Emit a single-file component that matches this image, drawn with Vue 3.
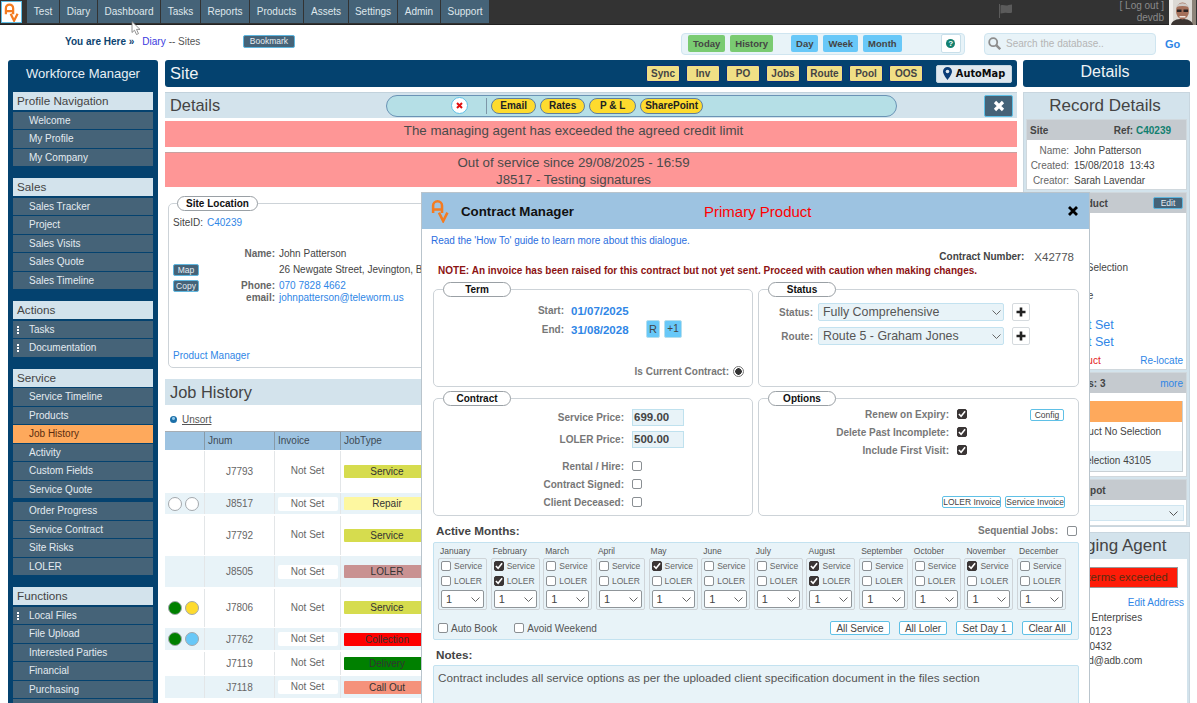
<script setup>
const topNav = [
  { label: 'Test', w: 32 }, { label: 'Diary', w: 37 }, { label: 'Dashboard', w: 62 }, { label: 'Tasks', w: 39 },
  { label: 'Reports', w: 48 }, { label: 'Products', w: 53 }, { label: 'Assets', w: 44 }, { label: 'Settings', w: 48 },
  { label: 'Admin', w: 42 }, { label: 'Support', w: 48 },
]

const sideGroups = [
  { title: 'Profile Navigation', items: [{ t: 'Welcome' }, { t: 'My Profile' }, { t: 'My Company' }] },
  { title: 'Sales', items: [{ t: 'Sales Tracker' }, { t: 'Project' }, { t: 'Sales Visits' }, { t: 'Sales Quote' }, { t: 'Sales Timeline' }] },
  { title: 'Actions', items: [{ t: 'Tasks', dots: true }, { t: 'Documentation', dots: true }] },
  {
    title: 'Service',
    items: [{ t: 'Service Timeline' }, { t: 'Products' }, { t: 'Job History', active: true }, { t: 'Activity' }, { t: 'Custom Fields' }, { t: 'Service Quote' },
      { t: 'Order Progress', gap: true }, { t: 'Service Contract' }, { t: 'Site Risks' }, { t: 'LOLER' }],
  },
  { title: 'Functions', items: [{ t: 'Local Files', dots: true }, { t: 'File Upload' }, { t: 'Interested Parties' }, { t: 'Financial' }, { t: 'Purchasing' }, { t: '' }] },
]

const siteBtns = [
  { t: 'Sync', w: 34 }, { t: 'Inv', w: 34 }, { t: 'PO', w: 34 }, { t: 'Jobs', w: 34 },
  { t: 'Route', w: 37 }, { t: 'Pool', w: 34 }, { t: 'OOS', w: 34 },
]
const pillBtns = [
  { t: 'Email', w: 45 }, { t: 'Rates', w: 45 }, { t: 'P & L', w: 47 }, { t: 'SharePoint', w: 63 },
]

const jobs = [
  { num: 'J7793', h: 41, type: 'Service', color: '#d6dc4e' },
  { num: 'J8517', h: 21, type: 'Repair', color: '#fdf7a0', dots: ['#fff', '#fff'] },
  { num: 'J7792', h: 39, type: 'Service', color: '#d6dc4e' },
  { num: 'J8505', h: 31, type: 'LOLER', color: '#c99292' },
  { num: 'J7806', h: 38, type: 'Service', color: '#d6dc4e', dots: ['#008000', '#fedb2e'] },
  { num: 'J7762', h: 22, type: 'Collection', color: '#fe0000', dots: ['#008000', '#68c8f8'] },
  { num: 'J7119', h: 23, type: 'Delivery', color: '#008000' },
  { num: 'J7118', h: 22, type: 'Call Out', color: '#f5927b' },
]

const months = [
  { m: 'January' }, { m: 'February', s: true, l: true }, { m: 'March' }, { m: 'April' },
  { m: 'May', s: true }, { m: 'June' }, { m: 'July' }, { m: 'August', s: true, l: true },
  { m: 'September' }, { m: 'October' }, { m: 'November', s: true }, { m: 'December' },
]

const footBtns = [
  { t: 'All Service', w: 60 }, { t: 'All Loler', w: 48 }, { t: 'Set Day 1', w: 57 }, { t: 'Clear All', w: 50 },
]

const contractChecks = ['Rental / Hire:', 'Contract Signed:', 'Client Deceased:']
const optionChecks = ['Renew on Expiry:', 'Delete Past Incomplete:', 'Include First Visit:']
</script>

<template>
  <div class="page">
    <header class="topbar">
      <div class="logoBox">
        <svg width="15" height="19" viewBox="0 0 17 22" fill="none" stroke="#f47b20" stroke-width="2.6">
          <path d="M2 13V6a4.2 4.2 0 0 1 8.4 0v7M2 9.5h8.4" />
          <path d="M7.5 12.5l4 8 4-8" />
        </svg>
      </div>
      <nav class="topNav">
        <a v-for="n in topNav" :key="n.label" class="topItem" :style="{ width: n.w + 'px' }">{{ n.label }}</a>
      </nav>
      <svg class="flag" width="15" height="14" viewBox="0 0 15 14">
        <path d="M1 0h1v14H1zM2.500 1.500c3-1.500 5 1 8-.5l3.500-.5v8c-3 1.500-5-.5-8 .5l-3.500.5z" fill="#5b5b5b" />
      </svg>
      <div class="userInfo">
        <span>[ Log out ]</span>
        <span>devdb</span>
      </div>
      <svg class="avatar" width="27" height="25" viewBox="0 0 27 25">
        <rect width="27" height="25" fill="#dcd9d4" />
        <rect width="4" height="25" fill="#f1efec" />
        <rect x="23" width="4" height="25" fill="#8d8479" />
        <path d="M2 25c1-5 6-6 11-6s10 1 11 6z" fill="#3b3431" />
        <ellipse cx="13.500" cy="11" rx="6.500" ry="8.500" fill="#a5705a" />
        <path d="M7 7c2-5 11-5 13 0-4-1.500-9-1.500-13 0z" fill="#cfcac6" />
        <path d="M8 9.500h4.500v2.500H8zM14.500 9.500H19v2.500h-4.500z" fill="#2a2323" />
        <path d="M10.500 16h6v1.500h-6z" fill="#eee6e0" />
      </svg>
    </header>

    <div class="crumbBar">
      <div class="crumbs">
        <b>You are Here »</b>
        <a class="crumbLink">Diary</a>
        <span>-- Sites</span>
      </div>
      <button class="btnDark bookmark">Bookmark</button>
      <div class="rangeBox">
        <button class="rangeBtn green">Today</button>
        <button class="rangeBtn green">History</button>
        <button class="rangeBtn blue first">Day</button>
        <button class="rangeBtn blue">Week</button>
        <button class="rangeBtn blue">Month</button>
        <div class="helpBtn"><span class="helpDot">?</span></div>
      </div>
      <div class="searchBox">
        <svg width="13" height="13" viewBox="0 0 13 13" fill="none" stroke="#8d8d8d" stroke-width="1.800">
          <circle cx="5.200" cy="5.200" r="4" /><path d="M8.200 8.200l4 4" stroke-width="2.400" />
        </svg>
        <span>Search the database..</span>
      </div>
      <a class="goLink">Go</a>
    </div>

    <div class="columns">
      <aside class="sidebar">
        <h2 class="sideTitle">Workforce Manager</h2>
        <section v-for="g in sideGroups" :key="g.title" class="sideGroup">
          <h3 class="sideHead">{{ g.title }}</h3>
          <a v-for="i in g.items" :key="i.t" class="sideItem" :class="{ active: i.active, gapTop: i.gap }">
            <span v-if="i.dots" class="sideDots"><i></i><i></i><i></i></span>
            {{ i.t }}
          </a>
        </section>
      </aside>

      <main class="mainCol">
        <div class="siteBar">
          <h1>Site</h1>
          <div class="siteBtns">
            <button v-for="b in siteBtns" :key="b.t" class="siteBtn" :style="{ width: b.w + 'px' }">{{ b.t }}</button>
          </div>
          <button class="autoMap">
            <svg width="9" height="13" viewBox="0 0 9 13">
              <path d="M4.500 0a4.500 4.500 0 0 1 4.500 4.500C9 7.500 4.500 13 4.500 13S0 7.500 0 4.500A4.500 4.500 0 0 1 4.500 0z" fill="#0a3c76" />
              <circle cx="4.500" cy="4.500" r="1.800" fill="#dfe8ef" />
            </svg>
            AutoMap
          </button>
        </div>

        <div class="panelHead detailsHead">
          <h2>Details</h2>
          <div class="pillBar">
            <span class="redX">
              <svg width="7" height="7" viewBox="0 0 7 7"><path d="M1 1l5 5M6 1L1 6" stroke="#e01010" stroke-width="2" /></svg>
            </span>
            <span class="pillSep"></span>
            <button v-for="p in pillBtns" :key="p.t" class="pillBtn" :style="{ width: p.w + 'px' }">{{ p.t }}</button>
          </div>
          <button class="closeBtn">
            <svg width="12" height="12" viewBox="0 0 12 12"><path d="M2 2l8 8M10 2l-8 8" stroke="#fff" stroke-width="3.200" /></svg>
          </button>
        </div>

        <div class="banner one">The managing agent has exceeded the agreed credit limit</div>
        <div class="banner two">
          <div>Out of service since 29/08/2025 - 16:59</div>
          <div>J8517 - Testing signatures</div>
        </div>

        <div class="locBox">
          <div class="legend locLegend">Site Location</div>
          <div class="siteId">SiteID: <a class="link">C40239</a></div>
          <div class="locGrid">
            <span></span><b class="locLabel">Name:</b><span class="locVal">John Patterson</span>
            <button class="btnDark miniBtn">Map</button><span></span><span class="locVal">26 Newgate Street, Jevington, BN26 5QF</span>
            <button class="btnDark miniBtn">Copy</button><b class="locLabel">Phone:</b><a class="link locVal">070 7828 4662</a>
            <span></span><b class="locLabel">email:</b><a class="link locVal">johnpatterson@teleworm.us</a>
          </div>
          <a class="link productLink">Product Manager</a>
        </div>

        <div class="panelHead jobHead"><h2>Job History</h2></div>
        <div class="unsortRow">
          <span class="infoDot"></span>
          <a class="unsort">Unsort</a>
        </div>
        <div class="jobTable">
          <div class="jobRow headRow">
            <div></div><div>Jnum</div><div>Invoice</div><div>JobType</div>
          </div>
          <div v-for="(j, idx) in jobs" :key="j.num" class="jobRow" :class="{ alt: idx % 2 === 1 }" :style="{ height: j.h + 'px' }">
            <div class="dotCell">
              <template v-if="j.dots">
                <span v-for="(d, k) in j.dots" :key="k" class="dot" :style="{ background: d }"></span>
              </template>
            </div>
            <div class="numCell">{{ j.num }}</div>
            <div class="numCell"><span class="notSet">Not Set</span></div>
            <div class="typeCell"><span class="typeTag" :style="{ background: j.color }">{{ j.type }}</span></div>
          </div>
        </div>
      </main>

      <aside class="rightCol">
        <div class="rightBar">Details</div>
        <div class="rightPanel recordPanel">
          <h2 class="rightHead">Record Details</h2>
          <div class="rBox">
            <div class="rGray"><b>Site</b><b class="refText">Ref: <span>C40239</span></b></div>
            <div class="recRows">
              <span class="recKey">Name:</span><span>John Patterson</span>
              <span class="recKey">Created:</span><span>15/08/2018&nbsp; 13:43</span>
              <span class="recKey">Creator:</span><span>Sarah Lavendar</span>
            </div>
          </div>
          <div class="rBox prodBox">
            <div class="rGray"><b>Primary Product</b><button class="btnDark editBtn">Edit</button></div>
            <div class="prodRow r1">Product No Selection</div>
            <div class="prodRow r2">Service</div>
            <div class="prodRow big r3">Not Set</div>
            <div class="prodRow big r4">Not Set</div>
            <div class="prodRow r5"><span class="redText">Primary Product</span><a class="link">Re-locate</a></div>
          </div>
          <div class="rBox jobsBox">
            <div class="rGray"><b class="unitsText">Active Units: 3</b><a class="link">more</a></div>
            <div class="prodList">
              <div class="orangeRow"></div>
              <div class="listRow tall">Primary Product No Selection</div>
              <div class="listRow alt">Product Selection 43105</div>
            </div>
          </div>
          <div class="rBox depotBox">
            <div class="rGray"><b>Preferred Depot</b></div>
            <div class="depotSelect">
              <svg width="9" height="5" viewBox="0 0 9 5" fill="none" stroke="#555"><path d="M.500.500l4 4 4-4" /></svg>
            </div>
          </div>
        </div>
        <div class="rightPanel agentPanel">
          <h2 class="rightHead">Managing Agent</h2>
          <div class="agentBody">
            <div class="termsBar">Credit terms exceeded</div>
            <a class="link editAddr">Edit Address</a>
            <div class="agentLine">Arnold Golds Enterprises</div>
            <div class="agentLine phone">020 7946 0123</div>
            <div class="agentLine phone">020 7946 0432</div>
            <div class="agentLine">pk.arnold.gold@adb.com</div>
          </div>
        </div>
      </aside>
    </div>

    <!-- dialog floats over the page -->
    <div class="dialog">
      <div class="dlgHead">
        <svg class="dlgLogo" width="18" height="24" viewBox="0 0 17 22" fill="none" stroke="#f47b20" stroke-width="2.400">
          <path d="M2 13V6a4.200 4.200 0 0 1 8.400 0v7M2 9.500h8.400" />
          <path d="M7.500 12.500l4 8 4-8" />
        </svg>
        <span class="dlgTitle">Contract Manager</span>
        <span class="dlgPrimary">Primary Product</span>
        <svg class="dlgClose" width="10" height="10" viewBox="0 0 10 10"><path d="M1 1l8 8M9 1L1 9" stroke="#000" stroke-width="2.800" /></svg>
      </div>
      <div class="dlgBody">
        <a class="howTo">Read the 'How To' guide to learn more about this dialogue.</a>
        <div class="numberLine"><b>Contract Number:</b><span>X42778</span></div>
        <div class="note">NOTE: An invoice has been raised for this contract but not yet sent. Proceed with caution when making changes.</div>

        <div class="fsGrid topRow">
          <div class="fs">
            <div class="legend">Term</div>
            <div class="termRows">
              <b class="fsLabel">Start:</b><b class="dateVal">01/07/2025</b><span></span>
              <b class="fsLabel">End:</b><b class="dateVal">31/08/2028</b>
              <span class="termBtns"><button class="blueBtn">R</button><button class="blueBtn">+1</button></span>
            </div>
            <div class="currentLine">
              <b class="fsLabel">Is Current Contract:</b>
              <span class="radio"></span>
            </div>
          </div>
          <div class="fs">
            <div class="legend">Status</div>
            <div class="statusRows">
              <b class="fsLabel">Status:</b>
              <div class="selectBox">Fully Comprehensive
                <svg width="9" height="5" viewBox="0 0 9 5" fill="none" stroke="#666"><path d="M.500.500l4 4 4-4" /></svg>
              </div>
              <button class="plusBtn"><svg width="10" height="10" viewBox="0 0 10 10"><path d="M5 .500v9M.500 5h9" stroke="#222" stroke-width="2.600" /></svg></button>
              <b class="fsLabel">Route:</b>
              <div class="selectBox">Route 5 - Graham Jones
                <svg width="9" height="5" viewBox="0 0 9 5" fill="none" stroke="#666"><path d="M.500.500l4 4 4-4" /></svg>
              </div>
              <button class="plusBtn"><svg width="10" height="10" viewBox="0 0 10 10"><path d="M5 .500v9M.500 5h9" stroke="#222" stroke-width="2.600" /></svg></button>
            </div>
          </div>
        </div>

        <div class="fsGrid midRow">
          <div class="fs">
            <div class="legend">Contract</div>
            <div class="priceRows">
              <b class="fsLabel">Service Price:</b><span class="priceBox">699.00</span>
              <b class="fsLabel">LOLER Price:</b><span class="priceBox">500.00</span>
            </div>
            <div class="checkRows">
              <template v-for="c in contractChecks" :key="c">
                <b class="fsLabel">{{ c }}</b><span class="chk"></span>
              </template>
            </div>
          </div>
          <div class="fs optionsFs">
            <div class="legend">Options</div>
            <button class="outlineBtn configBtn">Config</button>
            <div class="optionRows">
              <template v-for="c in optionChecks" :key="c">
                <b class="fsLabel">{{ c }}</b>
                <span class="chk on"><svg width="9" height="8" viewBox="0 0 9 8" fill="none" stroke="#fff" stroke-width="1.800"><path d="M1 4l2.500 2.500L8 1" /></svg></span>
              </template>
            </div>
            <div class="invoiceBtns">
              <button class="outlineBtn">LOLER Invoice</button>
              <button class="outlineBtn">Service Invoice</button>
            </div>
          </div>
        </div>

        <div class="monthsTitle">
          <b class="sectionLabel">Active Months:</b>
          <span class="seqLine"><b class="fsLabel">Sequential Jobs:</b><span class="chk"></span></span>
        </div>
        <div class="monthsBox">
          <div class="monthGrid">
            <div v-for="mo in months" :key="mo.m" class="month">
              <div class="monthName">{{ mo.m }}</div>
              <div class="monthCard">
                <label class="monthChk">
                  <span class="chk" :class="{ on: mo.s }"><svg v-if="mo.s" width="9" height="8" viewBox="0 0 9 8" fill="none" stroke="#fff" stroke-width="1.800"><path d="M1 4l2.500 2.500L8 1" /></svg></span>Service
                </label>
                <label class="monthChk">
                  <span class="chk" :class="{ on: mo.l }"><svg v-if="mo.l" width="9" height="8" viewBox="0 0 9 8" fill="none" stroke="#fff" stroke-width="1.800"><path d="M1 4l2.500 2.500L8 1" /></svg></span>LOLER
                </label>
                <div class="daySelect">1
                  <svg width="9" height="5" viewBox="0 0 9 5" fill="none" stroke="#666"><path d="M.500.500l4 4 4-4" /></svg>
                </div>
              </div>
            </div>
          </div>
          <div class="monthFoot">
            <label class="footChk"><span class="chk"></span>Auto Book</label>
            <label class="footChk"><span class="chk"></span>Avoid Weekend</label>
            <div class="footBtns">
              <button v-for="b in footBtns" :key="b.t" class="outlineBtn wide" :style="{ width: b.w + 'px' }">{{ b.t }}</button>
            </div>
          </div>
        </div>

        <b class="sectionLabel notesLabel">Notes:</b>
        <div class="notes">Contract includes all service options as per the uploaded client specification document in the files section</div>
      </div>
    </div>

    <svg class="cursor" width="10" height="14" viewBox="0 0 10 14">
      <path d="M1 .500v11l2.500-2.300 2 4.300 2-.900-2-4.200H9z" fill="#fff" stroke="#777" stroke-width=".8" />
    </svg>
  </div>
</template>

<style>
html, body {
  margin: 0;
  background: #fff;
}
</style>

<style scoped>
.page {
  position: relative;
  width: 1197px;
  height: 703px;
  overflow: hidden;
  font-family: "Liberation Sans", Arial, sans-serif;
  font-size: 10px;
  color: #444;
}
button {
  font-family: inherit;
  padding: 0;
  cursor: pointer;
}
h1, h2, h3 {
  margin: 0;
  font-weight: 400;
}
.link {
  color: #2f86e6;
}

/* top bar */
.topbar {
  display: flex;
  align-items: flex-start;
  height: 25px;
  background: #333;
  border-bottom: 1px solid #222;
  box-sizing: border-box;
}
.logoBox {
  display: flex;
  align-items: center;
  justify-content: center;
  width: 21px;
  height: 22px;
  margin: 1px 5px 0 1px;
  background: #fff;
  border: 1px solid #5fbfe6;
  box-sizing: border-box;
}
.topNav {
  display: flex;
  gap: 1px;
}
.topItem {
  display: flex;
  align-items: center;
  justify-content: center;
  height: 23px;
  background: #456378;
  color: #dfe7ec;
  font-size: 10px;
}
.flag {
  margin: 4px 0 0 509px;
}
.userInfo {
  display: flex;
  flex-direction: column;
  align-items: flex-end;
  width: 45px;
  margin: 0 0 0 106px;
  color: #8a8a8a;
  font-size: 10px;
  line-height: 11.500px;
}
.avatar {
  margin-left: 5px;
}

/* breadcrumb row */
.crumbBar {
  display: flex;
  align-items: center;
  height: 35px;
}
.crumbs {
  display: flex;
  gap: 8px;
  width: 178px;
  margin-left: 65px;
  margin-top: -3px;
  color: #555;
}
.crumbs b {
  color: #0e4470;
}
.crumbs span {
  margin-left: -5px;
}
.crumbLink {
  color: #3a3ae0;
}
.btnDark {
  background: #456378;
  color: #e6edf2;
  border: 1px solid #5fb6de;
  border-radius: 2px;
}
.bookmark {
  width: 52px;
  height: 13px;
  margin-top: -3px;
  font-size: 8.500px;
  line-height: 10px;
}
.rangeBox {
  display: flex;
  align-items: center;
  width: 284px;
  height: 22px;
  margin: 2px 0 0 386px;
  padding-left: 6px;
  gap: 5px;
  box-sizing: border-box;
  background: #e8f3f8;
  border: 1px solid #cfe5f0;
  border-radius: 4px;
}
.rangeBtn {
  height: 17px;
  padding: 0 4px;
  font-size: 9.500px;
  font-weight: 700;
  color: #444;
  border: 1px solid transparent;
  border-radius: 2px;
}
.rangeBtn.green {
  background: #7acb72;
}
.rangeBtn.blue {
  background: #68c8f8;
}
.rangeBtn.first {
  margin-left: 13px;
}
.helpBtn {
  display: flex;
  align-items: center;
  justify-content: center;
  width: 18px;
  height: 17px;
  margin-left: 34px;
  background: #fff;
  border: 1px solid #c9dfe9;
  border-radius: 2px;
}
.helpDot {
  display: block;
  width: 9px;
  height: 9px;
  border-radius: 50%;
  background: #12806f;
  color: #fff;
  font-size: 8px;
  font-weight: 700;
  line-height: 9px;
  text-align: center;
}
.searchBox {
  display: flex;
  align-items: center;
  gap: 5px;
  width: 172px;
  height: 22px;
  margin: 2px 0 0 19px;
  padding-left: 3px;
  box-sizing: border-box;
  background: #e8f3f8;
  border: 1px solid #cfe5f0;
  border-radius: 4px;
  color: #b5b5b5;
  font-size: 10px;
}
.goLink {
  margin: 2px 0 0 9px;
  color: #2f86e6;
  font-size: 11px;
  font-weight: 700;
}

/* page columns */
.columns {
  display: grid;
  grid-template-columns: 150px 852px 167px;
  column-gap: 7px;
  padding-left: 8px;
}

/* sidebar */
.sidebar {
  height: 643px;
  padding: 0 5px;
  box-sizing: border-box;
  overflow: hidden;
  background: #04426f;
  border-radius: 3px 3px 0 0;
}
.sideTitle {
  height: 32px;
  color: #e8eff4;
  font-size: 13px;
  line-height: 28px;
  text-align: center;
}
.sideGroup {
  margin-bottom: 12px;
}
.sideHead {
  height: 18px;
  margin-bottom: 1.500px;
  padding-left: 4px;
  background: #d3e3ec;
  color: #444;
  font-size: 11.700px;
  line-height: 18px;
}
.sideItem {
  position: relative;
  display: block;
  height: 17.500px;
  margin-bottom: 1px;
  padding-left: 16px;
  background: #456378;
  color: #e4ebf0;
  font-size: 10px;
  line-height: 17.500px;
}
.sideItem.active {
  background: #fea95c;
  color: #5a2c10;
}
.sideItem.gapTop {
  margin-top: 4px;
}
.sideDots {
  position: absolute;
  left: 4px;
  top: 5px;
  display: flex;
  flex-direction: column;
  gap: 1px;
}
.sideDots i {
  display: block;
  width: 2px;
  height: 2px;
  background: #fff;
}

/* main column */
.mainCol {
  height: 643px;
  overflow: hidden;
}
.siteBar {
  display: flex;
  align-items: center;
  height: 27px;
  padding: 0 5px;
  background: #04426f;
  border-radius: 3px;
}
.siteBar h1 {
  flex: 1;
  color: #eef3f6;
  font-size: 16.500px;
}
.siteBtns {
  display: flex;
  gap: 6px;
}
.siteBtn {
  height: 17px;
  background: #f0df85;
  border: 1px solid #0a2f7a;
  border-radius: 2px;
  color: #444;
  font-size: 10px;
  font-weight: 700;
}
.autoMap {
  display: flex;
  align-items: center;
  justify-content: center;
  gap: 4px;
  width: 76px;
  height: 18px;
  margin-left: 13px;
  background: #dfe8ef;
  border: 1px solid #c5d5e0;
  border-radius: 2px;
  color: #0b0b0b;
  font-family: "DejaVu Sans", sans-serif;
  font-size: 9.800px;
  font-weight: 700;
}
.panelHead {
  display: flex;
  align-items: center;
  background: #d3e3ec;
  padding-left: 5px;
}
.panelHead h2 {
  color: #444;
  font-size: 16.400px;
}
.detailsHead {
  height: 26px;
  margin-top: 5px;
  border-top: 1px solid #c2d2dc;
  box-sizing: border-box;
  position: relative;
}
.pillBar {
  display: flex;
  align-items: center;
  width: 511px;
  height: 22px;
  margin-left: 166px;
  padding-left: 64px;
  gap: 4px;
  box-sizing: border-box;
  background: #b5dfe6;
  border: 1px solid #6a93b5;
  border-radius: 11px;
}
.redX {
  display: flex;
  align-items: center;
  justify-content: center;
  width: 17px;
  height: 17px;
  background: #fff;
  border: 1px solid #5fc0e6;
  border-radius: 50%;
  box-sizing: border-box;
}
.pillSep {
  width: 1px;
  height: 16px;
  margin: 0 0 0 14px;
  background: #7d97a8;
}
.pillBtn {
  height: 16px;
  background: #fedb2e;
  border: 1px solid #5f7ea0;
  border-radius: 8px;
  color: #222;
  font-size: 10px;
  font-weight: 700;
}
.closeBtn {
  display: flex;
  align-items: center;
  justify-content: center;
  width: 29px;
  height: 22px;
  margin-left: 87px;
  background: #456378;
  border: 1px solid #5fc0e6;
  border-radius: 2px;
}
.banner {
  padding-right: 35px;
  background: #fe9696;
  color: #4a4a4a;
  font-size: 13.300px;
  text-align: center;
}
.banner.one {
  height: 26px;
  margin-top: 3px;
  line-height: 20px;
}
.banner.two {
  height: 35px;
  margin-top: 5px;
  padding-top: 1px;
  box-sizing: border-box;
  line-height: 17px;
  border-top: 1px solid #c9a0a0;
}
.locBox {
  height: 165px;
  margin: 16px 0 0 3px;
  padding: 0 4px;
  box-sizing: border-box;
  border: 1px solid #cdd3d8;
  border-radius: 5px;
}
.legend {
  box-sizing: border-box;
  width: 68px;
  height: 15px;
  margin: -8px 0 0 5px;
  background: #fff;
  border: 1px solid #9aa0a5;
  border-radius: 8px;
  color: #111;
  font-size: 10px;
  font-weight: 700;
  line-height: 13px;
  text-align: center;
}
.locLegend {
  width: 81px;
  margin-left: 4px;
}
.siteId {
  display: flex;
  gap: 4px;
  margin-top: 4.500px;
  line-height: 13px;
}
.locGrid {
  display: grid;
  grid-template-columns: 26px 76px 1fr;
  grid-template-rows: 16px 16px 16px 8px;
  align-items: center;
  margin-top: 17.500px;
  line-height: 12px;
}
.locLabel {
  color: #666;
  text-align: right;
}
.locVal {
  padding-left: 4px;
  white-space: nowrap;
}
.miniBtn {
  width: 26px;
  height: 12px;
  font-size: 8.500px;
  line-height: 9px;
}
.productLink {
  display: block;
  margin-top: 48px;
}
.jobHead {
  height: 26px;
  margin-top: 11px;
  padding-top: 1px;
  box-sizing: border-box;
}
.unsortRow {
  display: flex;
  align-items: center;
  gap: 5px;
  height: 26px;
  padding-left: 5px;
  padding-top: 2px;
  box-sizing: border-box;
  background: #fff;
}
.infoDot {
  width: 7px;
  height: 7px;
  background: radial-gradient(circle at 50% 35%, #8fc6e8 0 1px, #1b6fa8 2px);
  border-radius: 50%;
}
.unsort {
  text-decoration: underline;
  color: #555;
}
.jobTable {
  border-top: 1px solid #a6adb3;
}
.jobRow {
  display: grid;
  grid-template-columns: 40px 70px 66px 1fr;
  margin-bottom: 1.500px;
  background: #fff;
}
.jobRow > div {
  display: flex;
  align-items: center;
  border-right: 1px solid #e3e6e8;
}
.jobRow.alt {
  background: #e8f3f8;
}
.headRow {
  height: 17.500px;
  margin-bottom: 1px;
  background: #9dc3e1;
}
.headRow > div {
  padding-left: 3px;
  border-right: 1px solid #8799a7;
  color: #3d4a55;
}
.dotCell {
  gap: 3px;
  padding-left: 3px;
}
.dot {
  width: 14px;
  height: 14px;
  box-sizing: border-box;
  border: 1px solid #a3a8ac;
  border-radius: 50%;
}
.numCell {
  justify-content: center;
  color: #666;
}
.notSet {
  width: 60px;
  height: 14px;
  background: #fff;
  border-radius: 2px;
  line-height: 14px;
  text-align: center;
}
.typeCell {
  padding-left: 3px;
}
.typeTag {
  width: 86px;
  height: 13px;
  border-radius: 1px;
  color: #333;
  line-height: 13px;
  text-align: center;
}

/* right column */
.rightCol {
  width: 167px;
  margin-left: -1px;
}
.rightBar {
  height: 27px;
  padding-right: 3px;
  box-sizing: border-box;
  background: #04426f;
  border-radius: 3px;
  color: #eef3f6;
  font-size: 16px;
  line-height: 24px;
  text-align: center;
}
.rightPanel {
  margin-top: 5px;
  padding: 0 2px 3px;
  background: #d3e3ec;
  border: 1px solid #c8d6df;
  box-sizing: border-box;
}
.recordPanel {
  height: 435px;
}
.rightHead {
  height: 26px;
  padding-right: 3px;
  color: #444;
  font-size: 17px;
  line-height: 25px;
  text-align: center;
}
.rBox {
  background: #fff;
  border: 1px solid #d0d8dd;
  box-sizing: border-box;
  margin-bottom: 2px;
}
.rGray {
  display: flex;
  align-items: center;
  justify-content: space-between;
  height: 20px;
  padding: 0 3px 0 3px;
  background: #c5cacf;
  color: #444;
}
.refText span {
  color: #12806f;
}
.refText {
  margin-right: 12px;
}
.unitsText {
  margin-left: 6px;
}
.recRows {
  display: grid;
  grid-template-columns: 42px 1fr;
  column-gap: 5px;
  padding-top: 4px;
  height: 49px;
  box-sizing: border-box;
  line-height: 14.400px;
}
.recKey {
  text-align: right;
  color: #666;
}
.prodBox {
  height: 178px;
}
.editBtn {
  width: 30px;
  height: 12px;
  font-size: 8.500px;
  line-height: 8px;
}
.prodRow {
  padding-left: 7px;
  line-height: 13px;
  white-space: nowrap;
}
.r1 {
  margin-top: 48px;
}
.r2 {
  margin-top: 15px;
  padding-left: 33px;
}
.big {
  padding-left: 45px;
  font-size: 12.500px;
  color: #2f86e6;
  line-height: 17px;
}
.r3 {
  margin-top: 15px;
}
.r5 {
  display: flex;
  justify-content: space-between;
  align-items: center;
  margin-top: 3px;
  padding: 0 3px 0 2px;
}
.redText {
  color: #e31b1b;
}
.jobsBox {
  height: 105px;
}
.jobsBox .rGray {
  padding-right: 3px;
  margin-bottom: 9px;
}
.prodList {
  margin-right: 3px;
  border: 1px solid #c8d0d5;
  border-top: 0;
  border-left: 0;
  margin-top: -1px;
}
.orangeRow {
  height: 21px;
  background: #fea95c;
}
.listRow {
  padding-left: 3px;
  line-height: 14px;
  white-space: nowrap;
}
.listRow.tall {
  height: 29px;
  padding-top: 3px;
  box-sizing: border-box;
}
.listRow.alt {
  height: 20px;
  padding: 3px 0 0 15px;
  box-sizing: border-box;
  background: #e8f3f8;
}
.depotBox {
  height: 47px;
}
.depotSelect {
  display: flex;
  align-items: center;
  justify-content: flex-end;
  height: 14px;
  margin: 5px 2px 0 2px;
  padding-right: 5px;
  background: #e8f3f8;
  border: 1px solid #cfe5f0;
}
.agentPanel {
  height: 180px;
}
.agentBody {
  height: 150px;
  padding: 8px 3px 0;
  background: #fff;
}
.termsBar {
  height: 21px;
  margin: 0 6px 0 15px;
  background: #fe1c08;
  border: 1px solid #999;
  box-sizing: border-box;
  color: #5a2c10;
  font-size: 11.300px;
  line-height: 18px;
  text-align: center;
}
.editAddr {
  display: block;
  margin-top: 8px;
  text-align: right;
  line-height: 13px;
}
.agentLine {
  padding-left: 2px;
  margin-top: 1.500px;
  line-height: 13px;
  white-space: nowrap;
}
.agentLine.phone {
  padding-left: 16px;
}

/* dialog */
.dialog {
  position: absolute;
  left: 421px;
  top: 192px;
  width: 669px;
  height: 540px;
  background: #fff;
  border: 1px solid #b9c4cc;
  box-sizing: border-box;
}
.dlgHead {
  display: flex;
  align-items: center;
  height: 36px;
  background: #9dc3e1;
}
.dlgLogo {
  margin-left: 9px;
}
.dlgTitle {
  width: 243px;
  margin-left: 12px;
  color: #111;
  font-size: 13.300px;
  font-weight: 700;
  white-space: nowrap;
}
.dlgPrimary {
  width: 365px;
  color: #f00;
  font-size: 15px;
  white-space: nowrap;
}
.dlgClose {
  margin-left: -1px;
}
.dlgBody {
  padding: 5px 10px 0 11px;
}
.howTo {
  display: block;
  margin-left: -2px;
  color: #2a6ee0;
  line-height: 13px;
}
.numberLine {
  display: flex;
  justify-content: flex-end;
  align-items: center;
  gap: 10px;
  height: 13px;
  margin: 3px 5px 0 0;
}
.numberLine span {
  font-size: 11.500px;
  color: #555;
}
.note {
  margin: 1px 0 0 5px;
  color: #8c1313;
  font-weight: 700;
  letter-spacing: .02px;
  line-height: 13px;
  white-space: nowrap;
}
.fsGrid {
  display: grid;
  grid-template-columns: 320px 321px;
  column-gap: 5px;
}
.topRow {
  height: 98px;
  margin-top: 12px;
}
.midRow {
  height: 118px;
  margin-top: 11px;
}
.fs {
  position: relative;
  border: 1px solid #cdd3d8;
  border-radius: 5px;
  box-sizing: border-box;
}
.fs .legend {
  width: 68px;
  margin-left: 9px;
}
.fsLabel {
  color: #777;
  text-align: right;
  white-space: nowrap;
}
.termRows {
  display: grid;
  grid-template-columns: 130px 75px 1fr;
  column-gap: 5px;
  align-items: center;
  grid-auto-rows: 19px;
  margin-top: 4px;
}
.dateVal {
  margin-left: 2px;
  color: #2f86e6;
  font-size: 11.500px;
  white-space: nowrap;
}
.termBtns {
  display: flex;
  gap: 4px;
  margin: -2px 0 0 -3px;
}
.blueBtn {
  width: 14px;
  height: 18px;
  background: #68c8f8;
  border: 1px solid #b5dfee;
  border-radius: 2px;
  color: #444;
  font-size: 11px;
}
.blueBtn + .blueBtn {
  width: 18px;
  font-size: 10px;
}
.currentLine {
  display: flex;
  align-items: center;
  justify-content: flex-end;
  gap: 4px;
  margin: 27px 8px 0 0;
}
.radio {
  width: 11px;
  height: 11px;
  box-sizing: border-box;
  border: 1px solid #777;
  border-radius: 50%;
  background: radial-gradient(circle, #333 0 3px, #fff 3.500px);
}
.statusRows {
  display: grid;
  grid-template-columns: 54px 186px 18px;
  column-gap: 5px;
  row-gap: 6px;
  align-items: center;
  grid-auto-rows: 18px;
  margin-top: 6px;
}
.statusRows .plusBtn {
  margin-left: 3px;
}
.selectBox {
  display: flex;
  align-items: center;
  justify-content: space-between;
  height: 18px;
  padding: 0 2px 0 4px;
  box-sizing: border-box;
  background: #e8f3f8;
  border: 1px solid #c3e2f0;
  border-radius: 2px;
  color: #555;
  font-size: 12.400px;
  white-space: nowrap;
}
.plusBtn {
  display: flex;
  align-items: center;
  justify-content: center;
  width: 18px;
  height: 18px;
  background: #fff;
  border: 1px solid #d5dade;
  border-radius: 2px;
}
.priceRows {
  display: grid;
  grid-template-columns: 190px 52px;
  column-gap: 8px;
  align-items: center;
  grid-auto-rows: 17px;
  row-gap: 5px;
  margin-top: 3px;
}
.priceBox {
  height: 17px;
  padding-left: 1px;
  box-sizing: border-box;
  background: #e8f3f8;
  border: 1px solid #bfe1ee;
  color: #444;
  font-size: 11.500px;
  font-weight: 700;
  line-height: 15px;
}
.checkRows {
  display: grid;
  grid-template-columns: 190px 11px;
  column-gap: 8px;
  align-items: center;
  grid-auto-rows: 18px;
  margin-top: 9px;
}
.chk {
  display: inline-flex;
  align-items: center;
  justify-content: center;
  width: 10px;
  height: 10px;
  flex: none;
  box-sizing: border-box;
  background: #fff;
  border: 1px solid #8a8f93;
  border-radius: 2px;
}
.chk.on {
  background: #3a3535;
  border-color: #3a3535;
}
.optionRows {
  display: grid;
  grid-template-columns: 190px 11px;
  column-gap: 8px;
  align-items: center;
  grid-auto-rows: 18px;
  margin-top: -1px;
}
.outlineBtn {
  height: 12px;
  padding: 0;
  background: #fff;
  border: 1px solid #5fc0e6;
  border-radius: 2px;
  color: #444;
  font-size: 8.500px;
  line-height: 9px;
}
.configBtn {
  position: absolute;
  right: 14px;
  top: 10px;
  width: 34px;
}
.invoiceBtns {
  position: absolute;
  right: 13px;
  bottom: 7px;
  display: flex;
  gap: 4px;
}
.monthsTitle {
  display: flex;
  align-items: center;
  justify-content: space-between;
  height: 15px;
  margin: 7px 2px 0 3px;
}
.sectionLabel {
  color: #444;
  font-size: 11.700px;
}
.seqLine {
  display: flex;
  align-items: center;
  gap: 9px;
}
.seqLine .fsLabel {
  font-size: 10px;
}
.monthsBox {
  height: 98px;
  margin-top: 4px;
  padding: 3px 6px 0 4px;
  width: 646px;
  box-sizing: border-box;
  background: #e8f3f8;
  border: 1px solid #c3e2f0;
  border-radius: 2px;
}
.monthGrid {
  display: grid;
  grid-template-columns: repeat(12, 49px);
  column-gap: 3.650px;
}
.monthName {
  padding-left: 2px;
  color: #555;
  font-size: 8.500px;
  line-height: 11px;
}
.monthCard {
  height: 52px;
  padding: 0 2px;
  box-sizing: border-box;
  border: 1px solid #cfd4d8;
  border-radius: 2px;
  margin-top: 1px;
}
.monthChk {
  display: flex;
  align-items: center;
  gap: 3px;
  height: 15px;
  color: #666;
  font-size: 8.500px;
  white-space: nowrap;
}
.monthChk:first-child {
  margin-top: -1px;
}
.daySelect {
  display: flex;
  align-items: center;
  justify-content: space-between;
  height: 18px;
  margin-top: 2px;
  padding: 0 3px 0 4px;
  box-sizing: border-box;
  background: #fff;
  border: 1px solid #8f9599;
  border-radius: 2px;
  font-size: 11px;
}
.monthFoot {
  display: flex;
  align-items: center;
  margin-top: 11px;
}
.footChk {
  display: flex;
  align-items: center;
  gap: 3px;
  margin-right: 17px;
  color: #555;
  font-size: 10px;
}
.footBtns {
  display: flex;
  gap: 9px;
  margin-left: auto;
}
.wide {
  height: 14px;
  font-size: 10px;
  line-height: 11px;
}
.notesLabel {
  display: block;
  margin: 8px 0 0 3px;
  line-height: 13px;
}
.notes {
  width: 646px;
  height: 60px;
  margin-top: 4px;
  padding: 5px 4px;
  box-sizing: border-box;
  background: #e8f3f8;
  border: 1px solid #c3e2f0;
  border-radius: 2px;
  color: #555;
  font-size: 11.700px;
}
.cursor {
  position: absolute;
  left: 131px;
  top: 21px;
}
</style>
